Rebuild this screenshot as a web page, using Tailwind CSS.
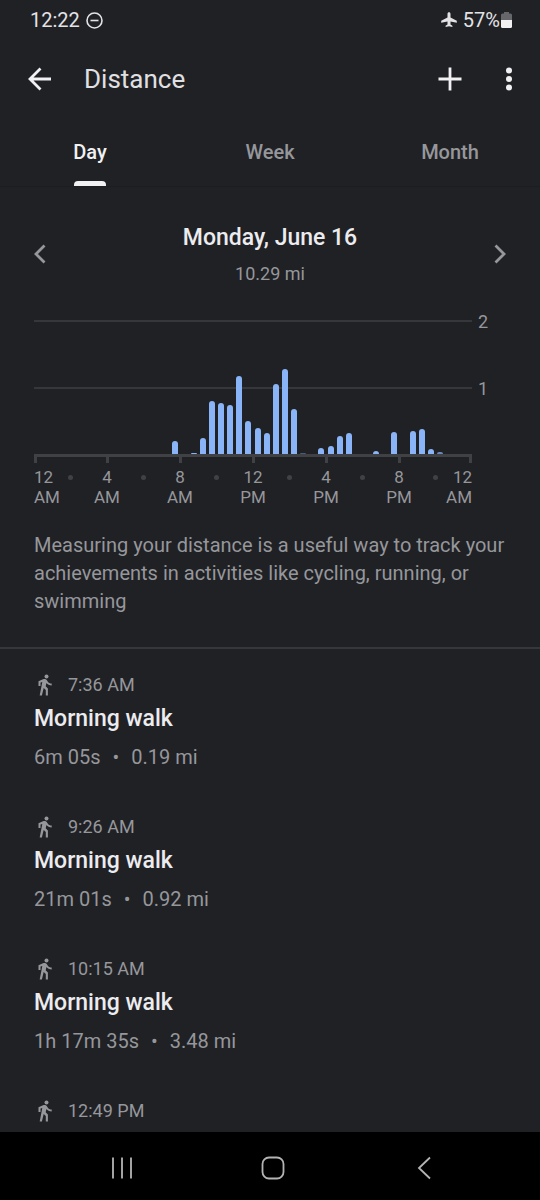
<!DOCTYPE html>
<html lang="en">
<head>
<meta charset="utf-8">
<meta name="viewport" content="width=device-width, initial-scale=1">
<title>Distance</title>
<script src="https://cdn.jsdelivr.net/npm/@tailwindcss/browser@4"></script>
</head>
<body class="flex h-screen flex-col bg-[#202125] font-[Roboto,sans-serif] text-[#96979b]">
<svg class="hidden" aria-hidden="true">
  <symbol id="walk" viewBox="0 0 22 22"><circle cx="12.500" cy="2.500" r="2" fill="currentColor"/><path fill="currentColor" d="M9 5.300 4.500 7.200V12h2V8.600l1.800-.7L5.700 21.500h2.200l1.800-7.500 2.100 2v5.500h2.100v-7l-2.200-2.200.7-3.200c1.200 1.500 3 2.400 5.300 2.400v-2c-1.800 0-3.200-.8-4-2.100l-1-1.500C11.900 4.800 10.700 4.600 9 5.300z"/></symbol>
</svg>

<div class="flex h-10 shrink-0 items-center justify-between pr-7 pl-[30px] text-xl text-[#e3e3e5]">
  <div class="flex items-center gap-1.5">
    <span>12:22</span>
    <svg class="size-[17px]" viewBox="0 0 17 17" fill="none" stroke="currentColor" stroke-width="1.600"><circle cx="8.500" cy="8.500" r="7.500"/><path d="M4.500 8.500h8"/></svg>
  </div>
  <div class="flex items-center">
    <svg class="mr-1.5 size-4" viewBox="0 0 16 16" fill="currentColor"><path d="M8 .3c.9 0 1.500.7 1.500 1.600v3.600l6.300 3.200v2L9.500 9.400v3.100l1.900 1.300v1.300L8 14.300l-3.400.8v-1.300l1.900-1.300V9.400L.2 10.700v-2l6.300-3.200V1.900C6.500 1 7.100.3 8 .3z"/></svg>
    <span>57%</span>
    <svg class="ml-px h-4 w-[11px]" viewBox="0 0 11 16"><path fill="#66676b" d="M3 0h5v1.500h1.500A1.500 1.500 0 0 1 11 3v5H0V3a1.500 1.500 0 0 1 1.500-1.500H3z"/><path fill="#f1f1f3" d="M0 8h11v6.500a1.500 1.500 0 0 1-1.500 1.500h-8A1.500 1.500 0 0 1 0 14.500z"/></svg>
  </div>
</div>

<header class="flex h-[78px] shrink-0 items-center pr-5 pl-7 text-[#f1f1f3]">
  <button type="button" aria-label="Back" class="mr-8 size-6"><svg class="size-6" viewBox="0 0 24 24" fill="none" stroke="currentColor" stroke-width="2.800"><path d="M12.500 1.500 2 12l10.500 10.500M2 12h21"/></svg></button>
  <h1 class="flex-1 text-[26px] text-[#e0e0e3]">Distance</h1>
  <button type="button" aria-label="Add" class="mr-9 size-6"><svg class="size-6" viewBox="0 0 24 24" fill="none" stroke="currentColor" stroke-width="2.800"><path d="M12 .5v23M.5 12h23"/></svg></button>
  <button type="button" aria-label="More options" class="h-6 w-[22px]"><svg class="h-6 w-[22px]" viewBox="0 0 22 24" fill="currentColor"><circle cx="11" cy="3.500" r="3"/><circle cx="11" cy="12" r="3"/><circle cx="11" cy="20.500" r="3"/></svg></button>
</header>

<nav aria-label="Period" class="grid h-[69px] shrink-0 grid-cols-3 border-b border-[#1c1d20] text-xl font-medium">
  <button type="button" aria-current="true" class="flex flex-col items-center justify-between pt-5 text-[#f1f1f3]"><span>Day</span><span class="h-[5px] w-8 rounded-t bg-[#f1f1f3]"></span></button>
  <button type="button" class="flex flex-col items-center pt-5">Week</button>
  <button type="button" class="flex flex-col items-center pt-5">Month</button>
</nav>

<main class="min-h-0 flex-1 overflow-y-auto [scrollbar-width:none]">
  <section class="px-[34px] pt-[35px]">
    <div class="flex items-center justify-between">
      <button type="button" aria-label="Previous day" class="h-5 w-3"><svg class="h-5 w-3" viewBox="0 0 12 20" fill="none" stroke="currentColor" stroke-width="2.800"><path d="M10.500 1.500 2 10l8.500 8.500"/></svg></button>
      <div class="text-center">
        <h2 class="text-[23px] leading-8 font-medium text-[#ececef]">Monday, June 16</h2>
        <p class="mt-2 text-lg leading-6">10.29 mi</p>
      </div>
      <button type="button" aria-label="Next day" class="h-5 w-3"><svg class="h-5 w-3" viewBox="0 0 12 20" fill="none" stroke="currentColor" stroke-width="2.800"><path d="m1.500 1.500 8.500 8.500-8.500 8.500"/></svg></button>
    </div>

    <div class="mt-[34px] flex text-lg leading-5">
      <div class="min-w-0 flex-1">
        <div class="relative">
          <div class="h-[67px] border-t-2 border-[#36373b]"></div>
          <div class="h-[67px] border-t-2 border-[#36373b]"></div>
          <!-- One column per half hour -->
          <div class="absolute inset-0 grid grid-cols-[repeat(48,minmax(0,1fr))] items-end justify-items-center *:row-start-1 *:w-1.5 *:rounded-t-[3px] *:bg-[#8ab4f8]">
            <i style="grid-column:16;height:13px"></i>
            <i style="grid-column:18;height:1px"></i>
            <i style="grid-column:19;height:16px"></i>
            <i style="grid-column:20;height:53px"></i>
            <i style="grid-column:21;height:51px"></i>
            <i style="grid-column:22;height:49px"></i>
            <i style="grid-column:23;height:78px"></i>
            <i style="grid-column:24;height:33px"></i>
            <i style="grid-column:25;height:26px"></i>
            <i style="grid-column:26;height:21px"></i>
            <i style="grid-column:27;height:70px"></i>
            <i style="grid-column:28;height:85px"></i>
            <i style="grid-column:29;height:45px"></i>
            <i style="grid-column:30;height:1px" class="opacity-40"></i>
            <i style="grid-column:32;height:6px"></i>
            <i style="grid-column:33;height:8px"></i>
            <i style="grid-column:34;height:18px"></i>
            <i style="grid-column:35;height:21px"></i>
            <i style="grid-column:38;height:3px"></i>
            <i style="grid-column:40;height:22px"></i>
            <i style="grid-column:42;height:23px"></i>
            <i style="grid-column:43;height:25px"></i>
            <i style="grid-column:44;height:5px"></i>
            <i style="grid-column:45;height:2px" class="opacity-70"></i>
          </div>
        </div>
        <div class="h-[3px] bg-[#404145]"></div>
        <div class="grid h-1.5 grid-cols-12 *:w-[3px] *:justify-self-center *:bg-[#404145]">
          <i class="col-span-1 justify-self-start!"></i><i class="col-span-2"></i><i class="col-span-2"></i><i class="col-span-2"></i><i class="col-span-2"></i><i class="col-span-2"></i><i class="col-span-1 justify-self-end!"></i>
        </div>
        <div class="mt-1 grid grid-cols-[repeat(24,minmax(0,1fr))] text-center text-[17px]">
          <span>12<br>AM</span>
          <i class="col-span-2 mt-2 size-[5px] justify-self-center rounded-full bg-[#404145]"></i>
          <span class="col-span-2">4<br>AM</span>
          <i class="col-span-2 mt-2 size-[5px] justify-self-center rounded-full bg-[#404145]"></i>
          <span class="col-span-2">8<br>AM</span>
          <i class="col-span-2 mt-2 size-[5px] justify-self-center rounded-full bg-[#404145]"></i>
          <span class="col-span-2">12<br>PM</span>
          <i class="col-span-2 mt-2 size-[5px] justify-self-center rounded-full bg-[#404145]"></i>
          <span class="col-span-2">4<br>PM</span>
          <i class="col-span-2 mt-2 size-[5px] justify-self-center rounded-full bg-[#404145]"></i>
          <span class="col-span-2">8<br>PM</span>
          <i class="col-span-2 mt-2 size-[5px] justify-self-center rounded-full bg-[#404145]"></i>
          <span class="justify-self-end text-right">12<br>AM</span>
        </div>
      </div>
      <div class="-mt-2 w-[34px] pl-1.5">
        <div class="h-[67px]">2</div>
        <div>1</div>
      </div>
    </div>
    <p class="-mr-4 mt-6 text-xl leading-[28px]">Measuring your distance is a useful way to track your achievements in activities like cycling, running, or swimming</p>
  </section>

  <ul class="mt-8 flex flex-col gap-[46px] border-t-2 border-[#36373b] px-[34px] pt-6">
    <li>
      <div class="flex items-center gap-3 text-lg leading-6"><svg class="size-[22px]"><use href="#walk"/></svg>7:36 AM</div>
      <h3 class="mt-2 text-[23px] leading-7 font-medium text-[#ececef]">Morning walk</h3>
      <p class="mt-3 flex gap-3 text-xl leading-6"><span>6m 05s</span><span>•</span><span>0.19 mi</span></p>
    </li>
    <li>
      <div class="flex items-center gap-3 text-lg leading-6"><svg class="size-[22px]"><use href="#walk"/></svg>9:26 AM</div>
      <h3 class="mt-2 text-[23px] leading-7 font-medium text-[#ececef]">Morning walk</h3>
      <p class="mt-3 flex gap-3 text-xl leading-6"><span>21m 01s</span><span>•</span><span>0.92 mi</span></p>
    </li>
    <li>
      <div class="flex items-center gap-3 text-lg leading-6"><svg class="size-[22px]"><use href="#walk"/></svg>10:15 AM</div>
      <h3 class="mt-2 text-[23px] leading-7 font-medium text-[#ececef]">Morning walk</h3>
      <p class="mt-3 flex gap-3 text-xl leading-6"><span>1h 17m 35s</span><span>•</span><span>3.48 mi</span></p>
    </li>
    <li>
      <div class="flex items-center gap-3 text-lg leading-6"><svg class="size-[22px]"><use href="#walk"/></svg>12:49 PM</div>
    </li>
  </ul>
</main>

<nav aria-label="System" class="flex h-[68px] shrink-0 items-center justify-between bg-black pt-1 pr-[104px] pl-[110px] text-[#b4b4b4]">
  <button type="button" aria-label="Recent apps" class="size-6"><svg class="size-6" viewBox="0 0 24 24" fill="none" stroke="currentColor" stroke-width="1.800"><path d="M3 1.500v21M12 1.500v21M21 1.500v21"/></svg></button>
  <button type="button" aria-label="Home" class="size-6"><svg class="size-6" viewBox="0 0 24 24" fill="none" stroke="currentColor" stroke-width="1.800"><rect x="1.500" y="1.500" width="21" height="21" rx="6.500"/></svg></button>
  <button type="button" aria-label="Back" class="size-6"><svg class="size-6" viewBox="0 0 24 24" fill="none" stroke="currentColor" stroke-width="1.800"><path d="M18 1.500 7 12l11 10.500"/></svg></button>
</nav>
</body>
</html>
